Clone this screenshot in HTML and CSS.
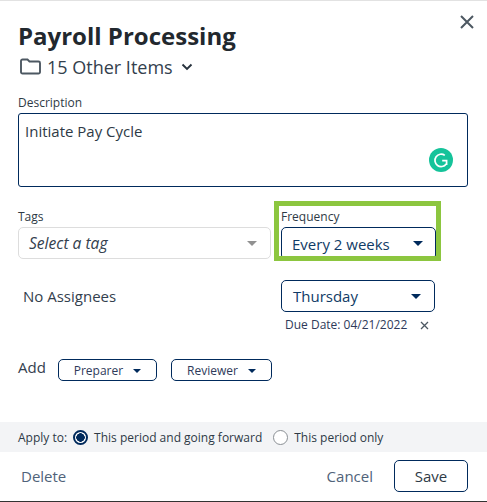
FILE: index.html
```html
<!DOCTYPE html>
<html lang="en">
<head>
<meta charset="utf-8">
<title>Payroll Processing</title>
<link rel="stylesheet" href="styles.css">
</head>
<body>
<div class="dialog">
  <main class="body">
    <button class="close" aria-label="Close"><svg width="14" height="14" viewBox="0 0 14 14"><path d="M1 1 L13 13 M13 1 L1 13" stroke="#4d5862" stroke-width="2" fill="none"/></svg></button>
    <h1 class="title">Payroll Processing</h1>
    <div class="folder">
      <svg class="folder-icon" width="21" height="17" viewBox="0 0 21 17"><path d="M1 14 V3 A1.5 1.5 0 0 1 2.5 1.5 H7.5 L9.5 3.5 H18.5 A1.5 1.5 0 0 1 20 5 V14 A1.5 1.5 0 0 1 18.5 15.5 H2.5 A1.5 1.5 0 0 1 1 14 Z" stroke="#4d5862" stroke-width="1.9" fill="none"/></svg>
      <span>15 Other Items</span>
      <svg class="chev" width="12" height="8" viewBox="0 0 12 8"><path d="M1.5 1.5 L6 6 L10.5 1.5" stroke="#27323d" stroke-width="1.9" fill="none"/></svg>
    </div>
    <label class="label desc-label">Description</label>
    <div class="textarea">Initiate Pay Cycle
      <span class="grammarly"><svg width="24" height="24" viewBox="0 0 24 24"><circle cx="12" cy="12" r="12" fill="#15c39a"/><path d="M15.8 7.4 A6.2 6.2 0 1 0 17.2 16 M13.2 12.6 H17.6 V17" stroke="#fff" stroke-width="1.7" fill="none"/></svg></span>
    </div>
    <div class="row tags-row">
      <div class="tags">
        <label class="label tag-label">Tags</label>
        <div class="select tag-select"><em>Select a tag</em><i class="caret grey"></i></div>
      </div>
      <div class="freq">
        <label class="label">Frequency</label>
        <div class="select dark freq-select"><span>Every 2 weeks</span><i class="caret"></i></div>
      </div>
    </div>
    <div class="row assign-row">
      <div class="no-assign">No Assignees</div>
      <div class="day">
        <div class="select dark day-select"><span>Thursday</span><i class="caret"></i></div>
        <div class="due">Due Date: 04/21/2022 <svg width="9" height="9" viewBox="0 0 9 9"><path d="M1 1 L8 8 M8 1 L1 8" stroke="#4d5862" stroke-width="1.3" fill="none"/></svg></div>
      </div>
    </div>
    <div class="add-row">
      <span class="add">Add</span>
      <button class="pill pill-p">Preparer <i class="caret small"></i></button>
      <button class="pill pill-r">Reviewer <i class="caret small"></i></button>
    </div>
  </main>
  <div class="apply">
    <span>Apply to:</span>
    <span class="radio on"></span><span class="opt">This period and going forward</span>
    <span class="radio"></span><span>This period only</span>
  </div>
  <footer class="foot">
    <button class="link delete">Delete</button>
    <button class="link cancel">Cancel</button>
    <button class="save">Save</button>
  </footer>
</div>
</body>
</html>
```
FILE: styles.css
```css
* { box-sizing: border-box; }
html, body { margin: 0; height: 100%; }
body { background: #fff; font-family: "Open Sans", sans-serif; color: #27323d; overflow: hidden; }
button { font-family: inherit; background: none; border: 0; padding: 0; }
.dialog { width: 487px; height: 502px; display: flex; flex-direction: column; border-top: 1px solid #e2e2e2; border-bottom: 1px solid #333; }
.body { position: relative; flex: 1; padding: 0 19px 0 18px; }
.close { position: absolute; top: 14px; right: 13px; width: 14px; height: 14px; display: block; line-height: 0; }
.title { margin: 18px 0 0; font-size: 24px; line-height: 34px; font-weight: 700; color: #22282e; }
.folder { display: flex; align-items: center; height: 27px; font-size: 18px; color: #33404d; margin-left: 2px; }
.folder-icon { margin-right: 6px; }
.chev { margin-left: 8px; }
.label { display: block; font-size: 12px; line-height: 16px; color: #2e3a46; }
.desc-label { margin-top: 15px; height: 18px; }
.textarea { position: relative; height: 74px; width: 450px; border: 1px solid #002a5c; border-radius: 3px; padding: 7px 6px; font-size: 15px; line-height: 20px; color: #2e3a46; }
.grammarly { position: absolute; right: 14px; bottom: 14px; width: 24px; height: 24px; line-height: 0; }
.row { display: flex; }
.tags-row { margin-top: 14px; align-items: flex-start; }
.tags { width: 263px; padding-top: 8px; }
.tag-label { margin-bottom: 2px; }
.freq { width: 167px; height: 60px; border: 5px solid #8cc63f; padding: 3px 2px 0; overflow: hidden; margin-left: -7px; }
.select { display: flex; align-items: center; justify-content: space-between; border-radius: 5px; font-size: 15px; }
.tag-select { width: 253px; height: 32px; border: 1px solid #ddd; padding: 0 13px 0 10px; color: #33404d; }
.tag-select em { font-size: 15.6px; }
.dark { border: 1px solid #002a5c; color: #103b66; }
.freq-select { width: 155px; height: 33px; padding: 0 12px 0 10px; margin-top: 2px; }
.day-select { width: 154px; height: 32px; padding: 0 13px 0 11px; }
.caret { display: block; width: 0; height: 0; border-left: 5px solid transparent; border-right: 5px solid transparent; border-top: 5px solid #002a5c; }
.caret.grey { border-top-color: #919191; }
.caret.small { display: inline-block; border-width: 4px 4px 0; margin-left: 7px; vertical-align: 2px; }
.assign-row { margin-top: 19px; }
.no-assign { width: 263px; padding-left: 5px; font-size: 15px; line-height: 32px; color: #33404d; }
.due { display: flex; align-items: center; gap: 13px; margin: 5px 0 0 4px; font-size: 12px; line-height: 16px; color: #2e3a5a; }
.add-row { display: flex; align-items: center; margin-top: 26px; }
.add { font-size: 15px; line-height: 20px; width: 40px; margin-top: -7px; color: #33404d; }
.pill { height: 22px; border: 1px solid #002a5c; border-radius: 5px; font-size: 12px; color: #2e3a5a; text-align: center; }
.pill-p { width: 99px; }
.pill-r { width: 101px; margin-left: 14px; }
.apply { display: flex; align-items: center; height: 30px; padding-left: 18px; background: #f3f4f6; font-size: 12px; color: #2e3a46; }
.radio { width: 15px; height: 15px; border: 1.5px solid #8a8f94; border-radius: 50%; margin: 0 6px 0 6px; background: #fff; }
.radio.on { border: 2px solid #002a5c; background: radial-gradient(circle, #002a5c 0 4px, #fff 4.5px); margin-left: 6px; }
.opt { margin-right: 5px; }
.foot { display: flex; align-items: center; height: 49px; padding: 0 19px 1px 21px; }
.link { font-size: 15px; color: #50637a; }
.delete { margin-right: auto; }
.cancel { margin-right: 21px; }
.save { width: 74px; height: 32px; border: 1px solid #002a5c; border-radius: 5px; font-size: 15px; color: #2e3a46; }
```
